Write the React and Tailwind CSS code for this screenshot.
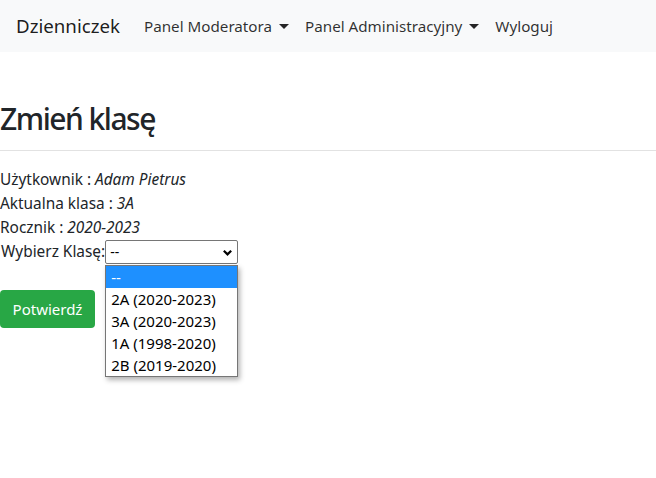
export default function App() {
  const font = { fontFamily: '"Noto Sans", "Open Sans", sans-serif' };
  return (
    <div className="min-h-[478px] bg-white text-[#212529] text-[15.4px] leading-[24px]" style={font}>
      <nav className="h-[52px] bg-[#f8f9fa] flex items-center px-4">
        <span className="text-[18.7px] leading-[30px] mr-[24px] text-[rgba(0,0,0,0.9)]">Dzienniczek</span>
        <div className="flex items-center text-[15.2px] text-[rgba(0,0,0,0.82)]">
          <span className="pr-2 flex items-center">
            Panel Moderatora
            <span className="ml-[7px] inline-block w-0 h-0 border-t-[5px] border-t-[rgba(0,0,0,0.85)] border-l-[5px] border-l-transparent border-r-[5px] border-r-transparent"></span>
          </span>
          <span className="px-2 flex items-center">
            Panel Administracyjny
            <span className="ml-[7px] inline-block w-0 h-0 border-t-[5px] border-t-[rgba(0,0,0,0.85)] border-l-[5px] border-l-transparent border-r-[5px] border-r-transparent"></span>
          </span>
          <span className="px-2">Wyloguj</span>
        </div>
      </nav>
      <h1 className="text-[30px] leading-[36px] font-medium tracking-[-1.5px] mt-[49px] mb-[13px]">Zmień klasę</h1>
      <hr className="border-0 border-t border-[#e2e2e2] mb-[17px]" />
      <div>Użytkownik : <i>Adam Pietrus</i></div>
      <div>Aktualna klasa : <i>3A</i></div>
      <div>Rocznik : <i>2020-2023</i></div>
      <div className="flex items-center">
        <span className="ml-[1px]">Wybierz Klasę:</span>
        <div className="relative">
          <div className="w-[133px] h-[24px] border border-[#767676] rounded-[2px] bg-white flex items-center justify-between pl-[4px] pr-[4px] text-[14px] text-black">
            <span>--</span>
            <svg width="11" height="11" viewBox="0 0 12 12"><path d="M2 4 L6 8 L10 4" fill="none" stroke="#000" strokeWidth="2.4" /></svg>
          </div>
          <div className="absolute left-0 top-[25px] w-[133px] bg-white border border-[#767676] shadow-[2px_3px_5px_rgba(0,0,0,0.3)] text-black text-[15px] leading-[22px] z-10">
            <div className="bg-[#1e90ff] text-white px-[5px] h-[22px]">--</div>
            <div className="px-[5px] h-[22px]">2A (2020-2023)</div>
            <div className="px-[5px] h-[22px]">3A (2020-2023)</div>
            <div className="px-[5px] h-[22px]">1A (1998-2020)</div>
            <div className="px-[5px] h-[22px]">2B (2019-2020)</div>
          </div>
        </div>
      </div>
      <button className="mt-[26px] bg-[#28a745] text-white rounded-[4px] px-3 py-[6px] h-[38px] w-[95px] text-[15px] leading-[24px]">Potwierdź</button>
    </div>
  );
}
